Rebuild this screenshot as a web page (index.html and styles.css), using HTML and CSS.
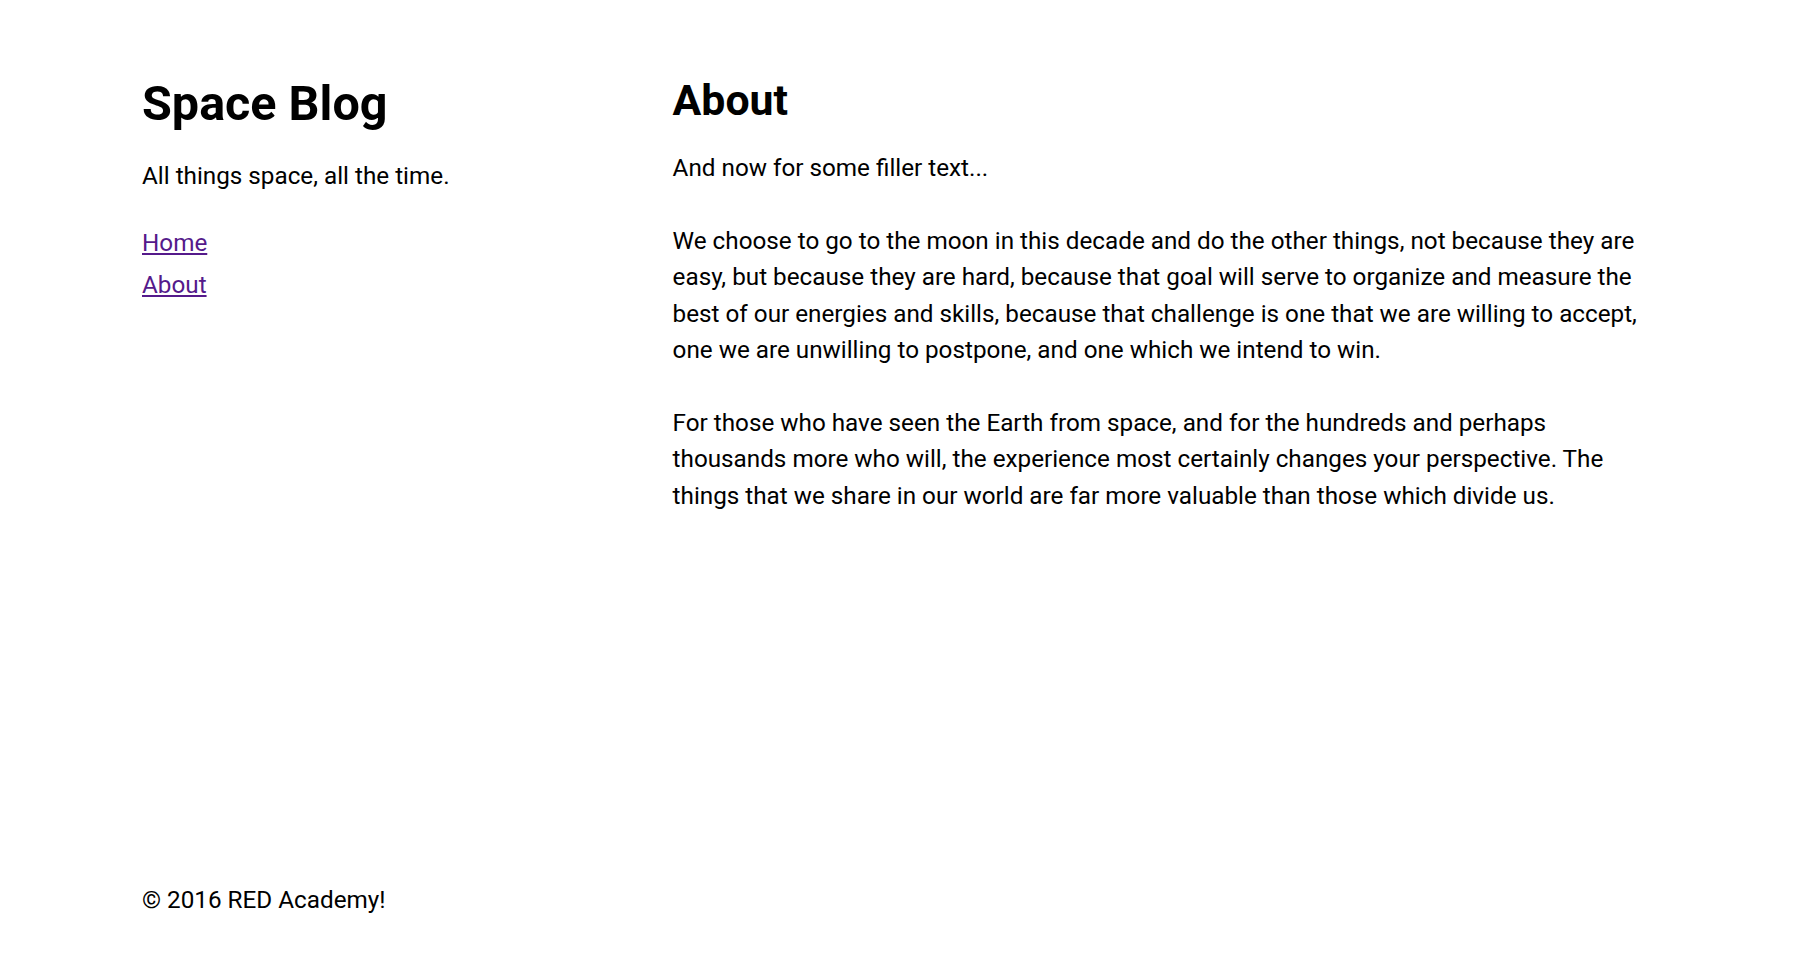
FILE: index.html
```html
<!DOCTYPE html>
<html lang="en">
<head>
<meta charset="utf-8">
<title>Space Blog - About</title>
<link rel="stylesheet" href="styles.css">
</head>
<body>
<div class="page">
  <div class="layout">
    <aside class="sidebar">
      <h1 class="site-title">Space Blog</h1>
      <p class="tagline">All things space, all the time.</p>
      <nav class="nav">
        <a class="nav-link" href="#">Home</a>
        <a class="nav-link" href="#">About</a>
      </nav>
    </aside>
    <main class="content">
      <h2 class="page-title">About</h2>
      <p class="para">And now for some filler text...</p>
      <p class="para">We choose to go to the moon in this decade and do the other things, not because they are easy, but because they are hard, because that goal will serve to organize and measure the best of our energies and skills, because that challenge is one that we are willing to accept, one we are unwilling to postpone, and one which we intend to win.</p>
      <p class="para">For those who have seen the Earth from space, and for the hundreds and perhaps thousands more who will, the experience most certainly changes your perspective. The things that we share in our world are far more valuable than those which divide us.</p>
    </main>
  </div>
  <footer class="footer">
    <p class="copy">© 2016 RED Academy!</p>
  </footer>
</div>
</body>
</html>
```

FILE: styles.css
```css
html, body {
  margin: 0;
  padding: 0;
  background: #fff;
}

body {
  font-family: Roboto, "Liberation Sans", sans-serif;
  font-size: 24.25px;
  line-height: 1.5;
  color: #000;
}

.page {
  box-sizing: border-box;
  min-height: 955px;
  padding: 75px 142px 37px;
  display: flex;
  flex-direction: column;
}

.layout {
  display: flex;
  flex: 1;
}

.sidebar {
  width: 35%;
  flex: none;
}

.content {
  flex: 1;
}

.site-title {
  margin: 0;
  font-size: 48.5px;
  line-height: 1.2;
  font-weight: 700;
}

.tagline {
  margin: 25px 0 0;
}

.nav {
  display: flex;
  flex-direction: column;
  gap: 6px;
  margin-top: 30px;
}

.nav-link {
  color: #551a8b;
  text-decoration: underline;
  align-self: flex-start;
}

.page-title {
  margin: 0 0 24px;
  font-size: 42.8px;
  line-height: 1.2;
  font-weight: 700;
}

.para {
  margin: 0 0 1.5em;
}

.para:last-child {
  margin-bottom: 0;
}

.footer {
  flex: none;
}

.copy {
  margin: 0;
}
```
